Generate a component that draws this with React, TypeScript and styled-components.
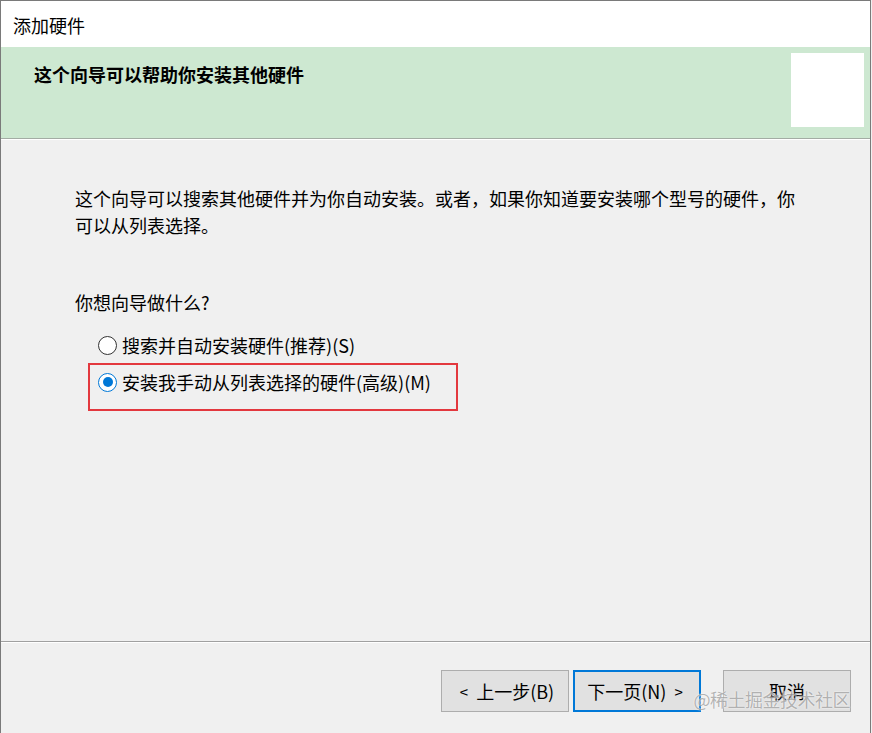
import React from "react";
import styled, { createGlobalStyle } from "styled-components";

const GlobalStyle = createGlobalStyle`
  html, body { margin: 0; padding: 0; background: #f0f0f0; }
  body {
    font-family: "Noto Sans CJK SC", "Microsoft YaHei", "Noto Sans", sans-serif;
    color: #000;
  }
  *, *::before, *::after { box-sizing: border-box; }
`;

const Window = styled.div`
  width: 871px;
  height: 733px;
  display: flex;
  flex-direction: column;
  border: 1px solid #7a7a7a;
  border-bottom: none;
  background: #f0f0f0;
  position: relative;
  overflow: hidden;
`;

const TitleBar = styled.div`
  height: 46px;
  flex: none;
  display: flex;
  align-items: center;
  padding-left: 12px;
  padding-top: 2px;
  background: #ffffff;
  font-size: 18px;
`;

const Header = styled.div`
  height: 92px;
  flex: none;
  display: flex;
  justify-content: space-between;
  align-items: flex-start;
  background: #cde8d1;
  border-bottom: 1px solid #a3aca4;
  box-shadow: 0 1px 0 #ffffff;
  padding: 6px 6px 0 33px;
`;

const HeaderTitle = styled.div`
  font-size: 18px;
  font-weight: 700;
  line-height: 27px;
  margin-top: 8px;
`;

const HeaderIcon = styled.div`
  width: 73px;
  height: 74px;
  background: #ffffff;
`;

const Content = styled.div`
  flex: 1;
  padding: 46px 0 0 74px;
`;

const Paragraph = styled.p`
  margin: 0;
  width: 726px;
  font-size: 18px;
  line-height: 27px;
`;

const Question = styled.p`
  margin: 50px 0 0;
  font-size: 18px;
  line-height: 27px;
`;

const Options = styled.div`
  display: flex;
  flex-direction: column;
  gap: 9px;
  margin-top: 15px;
  padding-left: 23px;
`;

const Option = styled.label<{ $highlighted?: boolean }>`
  position: relative;
  display: flex;
  align-items: center;
  gap: 5px;
  height: 28px;
  font-size: 18px;
  line-height: 28px;

  ${(p) =>
    p.$highlighted &&
    `
    &::after {
      content: "";
      position: absolute;
      left: -10px;
      top: -5px;
      width: 370px;
      height: 48px;
      border: 2px solid #e3383e;
      pointer-events: none;
    }
  `}
`;

const Radio = styled.span<{ $checked?: boolean }>`
  width: 19px;
  height: 19px;
  flex: none;
  border-radius: 50%;
  background: #ffffff;
  border: 1.5px solid ${(p) => (p.$checked ? "#0078d7" : "#333333")};
  display: flex;
  align-items: center;
  justify-content: center;

  &::before {
    content: "";
    width: 10px;
    height: 10px;
    border-radius: 50%;
    background: ${(p) => (p.$checked ? "#0078d7" : "transparent")};
  }
`;

const Separator = styled.div`
  flex: none;
  height: 2px;
  border-top: 1px solid #a0a0a0;
  border-bottom: 1px solid #ffffff;
`;

const Footer = styled.div`
  height: 90px;
  flex: none;
  display: flex;
  justify-content: flex-end;
  align-items: flex-start;
  padding: 27px 19px 0 0;
`;

const Button = styled.button<{ $focused?: boolean; $gapLeft?: number }>`
  width: 128px;
  height: 42px;
  margin-left: ${(p) => p.$gapLeft ?? 0}px;
  background: #e1e1e1;
  border: ${(p) => (p.$focused ? "2px solid #0078d7" : "1px solid #adadad")};
  font-family: "Noto Sans CJK SC", "Microsoft YaHei", sans-serif;
  font-size: 18px;
  color: #000;
  padding: 0;
  display: flex;
  align-items: center;
  justify-content: center;
  gap: 4px;
`;

const Chevron = styled.span`
  font-size: 15px;
  padding: 0 4px;
`;

const Watermark = styled.div`
  position: absolute;
  right: 20px;
  bottom: 21px;
  font-size: 18px;
  color: #a9a9a9;
  opacity: 0.85;
  text-shadow: 0 0 1px #ffffff, 0 0 2px #ffffff;
  pointer-events: none;
  letter-spacing: -0.5px;
`;

export default function App() {
  return (
    <>
      <GlobalStyle />
      <Window>
        <TitleBar>添加硬件</TitleBar>
        <Header>
          <HeaderTitle>这个向导可以帮助你安装其他硬件</HeaderTitle>
          <HeaderIcon />
        </Header>
        <Content>
          <Paragraph>
            这个向导可以搜索其他硬件并为你自动安装。或者，如果你知道要安装哪个型号的硬件，你可以从列表选择。
          </Paragraph>
          <Question>你想向导做什么?</Question>
          <Options>
            <Option>
              <Radio />
              搜索并自动安装硬件(推荐)(S)
            </Option>
            <Option $highlighted>
              <Radio $checked />
              安装我手动从列表选择的硬件(高级)(M)
            </Option>
          </Options>
        </Content>
        <Separator />
        <Footer>
          <Button>
            <Chevron>&lt;</Chevron>上一步(B)
          </Button>
          <Button $focused $gapLeft={4}>
            下一页(N)<Chevron>&gt;</Chevron>
          </Button>
          <Button $gapLeft={22}>取消</Button>
        </Footer>
        <Watermark>@稀土掘金技术社区</Watermark>
      </Window>
    </>
  );
}
